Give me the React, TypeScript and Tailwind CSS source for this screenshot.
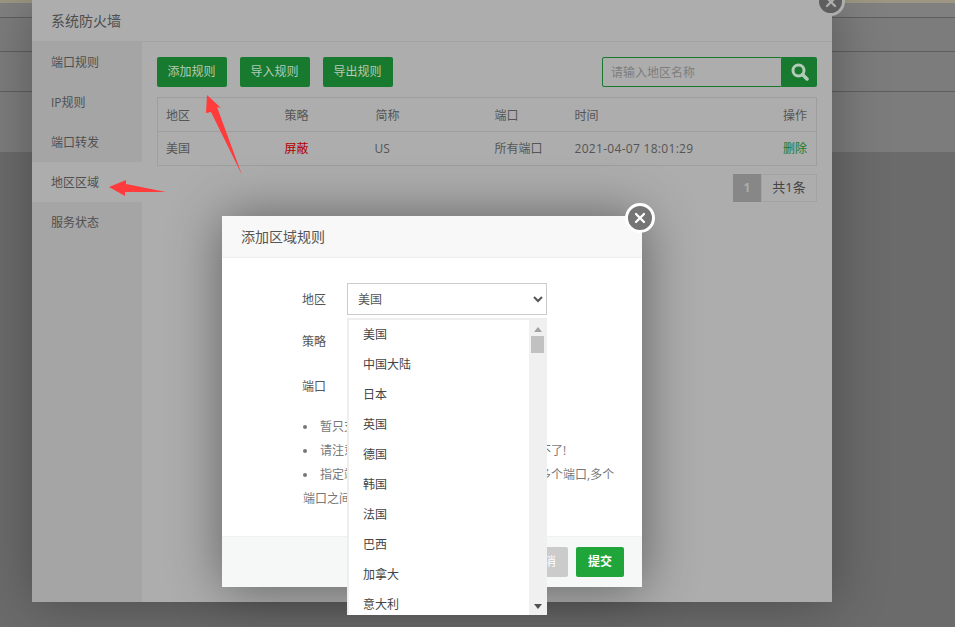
import { X } from 'lucide-react'

const fontStack = "font-['Open_Sans','Noto_Sans_CJK_SC',sans-serif]"

const sideItems = ['端口规则', 'IP规则', '端口转发', '地区区域', '服务状态']
const regions = ['美国', '中国大陆', '日本', '英国', '德国', '韩国', '法国', '巴西', '加拿大', '意大利']

function RuleButton({ label }: { label: string }) {
  return (
    <button className="h-[30px] w-[70px] rounded-[2px] bg-[#187a2e] pr-[1px] text-xs text-[#b3cbb8]">{label}</button>
  )
}

function FirewallPanel() {
  return (
    <div className="absolute left-[32px] top-0 flex h-[602px] w-[800px] flex-col bg-[#adadad] shadow-[1px_1px_50px_rgba(0,0,0,0.3)]">
      <div className="flex h-[42px] items-center border-b border-[#a3a3a3] pl-[19px] text-sm text-[#4e4e4e]">
        系统防火墙
      </div>
      <div className="flex flex-1">
        <ul className="w-[110px] bg-[#a5a5a5] text-xs text-[#505050]">
          {sideItems.map((item) => (
            <li
              key={item}
              className={`flex h-[40px] items-center pl-[19px] pt-[2px] ${item === '地区区域' ? 'bg-[#adadad]' : ''}`}
            >
              {item}
            </li>
          ))}
        </ul>
        <div className="flex-1 px-[15px] pt-[15px]">
          <div className="flex h-[30px] items-center">
            <div className="flex gap-[13px]">
              <RuleButton label="添加规则" />
              <RuleButton label="导入规则" />
              <RuleButton label="导出规则" />
            </div>
            <div className="ml-auto flex h-[30px] w-[215px]">
              <div className="flex w-[180px] items-center rounded-l-[2px] border border-[#187a2e] pl-[8px] pt-[2px] text-xs text-[#7d7d7d]">
                请输入地区名称
              </div>
              <div className="flex w-[35px] items-center justify-center rounded-r-[2px] bg-[#187a2e]">
                <svg width="18" height="18" viewBox="0 0 18 18" fill="none" stroke="#b3cbb8">
                  <circle cx="7.5" cy="7.5" r="5.5" strokeWidth="3" />
                  <line x1="11.5" y1="11.5" x2="16" y2="16" strokeWidth="3.5" strokeLinecap="round" />
                </svg>
              </div>
            </div>
          </div>
          <table className="mt-[10px] w-[660px] table-fixed border-collapse border border-[#9e9e9e] text-xs text-[#555555]">
            <thead>
              <tr className="h-[34px] border-b border-[#9e9e9e] text-left">
                <th className="w-[118px] pl-[8px] pt-[2px] font-normal">地区</th>
                <th className="w-[91px] pl-[9px] pt-[2px] font-normal">策略</th>
                <th className="w-[119px] pl-[9px] pt-[2px] font-normal">简称</th>
                <th className="w-[80px] pl-[9px] pt-[2px] font-normal">端口</th>
                <th className="pl-[9px] pt-[2px] font-normal">时间</th>
                <th className="w-[60px] pr-[9px] pt-[2px] text-right font-normal">操作</th>
              </tr>
            </thead>
            <tbody>
              <tr className="h-[34px]">
                <td className="pl-[8px]">美国</td>
                <td className="pl-[9px] text-[#b20000]">屏蔽</td>
                <td className="pl-[8px]">US</td>
                <td className="pl-[9px]">所有端口</td>
                <td className="pl-[9px] tracking-[0.3px]">2021-04-07 18:01:29</td>
                <td className="pr-[9px] text-right text-[#187a2e]">删除</td>
              </tr>
            </tbody>
          </table>
          <div className="mt-[8px] flex justify-end">
            <div className="flex h-[28px] w-[28px] items-center justify-center bg-[#878787] text-xs font-bold text-[#adadad]">
              1
            </div>
            <div className="flex h-[28px] w-[56px] items-center justify-center border border-[#a3a3a3] text-[13px] text-[#444444]">
              共1条
            </div>
          </div>
        </div>
      </div>
      <div className="absolute left-[784px] top-[-13px] flex h-[29px] w-[29px] items-center justify-center rounded-full border-[3px] border-[#adadad] bg-[#5e5e5e]">
        <X size={16} strokeWidth={3.5} className="text-[#adadad]" />
      </div>
    </div>
  )
}

function RegionDropdown() {
  return (
    <div className="absolute left-[125px] top-[102px] flex h-[297px] w-[200px] overflow-hidden border-2 border-r-0 border-b-0 border-[#eeeeee] bg-white">
      <ul className="flex-1 text-xs text-[#444444]">
        {regions.map((r) => (
          <li key={r} className="flex h-[30px] items-center pl-[14px]">
            {r}
          </li>
        ))}
      </ul>
      <div className="relative w-[18px] bg-[#f0f0f0]">
        <div className="absolute left-[5px] top-[7px] h-0 w-0 border-x-[4px] border-b-[5px] border-x-transparent border-b-[#a3a3a3]" />
        <div className="absolute left-[2px] top-[16px] h-[17px] w-[13px] bg-[#c1c1c1]" />
        <div className="absolute bottom-[6px] left-[5px] h-0 w-0 border-x-[4px] border-t-[5px] border-x-transparent border-t-[#505050]" />
      </div>
    </div>
  )
}

function AddRuleDialog() {
  return (
    <div className="absolute left-[222px] top-[216px] flex h-[371px] w-[420px] flex-col bg-white shadow-[1px_1px_50px_rgba(0,0,0,0.45)]">
      <div className="flex h-[42px] items-center border-b border-[#eeeeee] bg-[#f8f8f8] pl-[19px] text-sm text-[#555555]">
        添加区域规则
      </div>
      <div className="flex-1 pl-[80px] pr-[27px] pt-[25px] text-xs text-[#555555]">
        <div className="mb-[10px] flex h-[32px] items-center">
          <span className="w-[45px] pt-[2px]">地区</span>
          <select className="h-[32px] w-[200px] border border-[#cccccc] bg-white pl-[6px] pt-[1px] text-xs text-[#555555]">
            <option>美国</option>
          </select>
        </div>
        <div className="mb-[13px] flex h-[32px] items-center">
          <span className="w-[45px] pt-[2px]">策略</span>
        </div>
        <div className="flex h-[32px] items-center">
          <span className="w-[45px] pt-[2px]">端口</span>
        </div>
        <ul className="ml-[1px] mt-[13px] list-inside list-disc leading-[24px] text-[#777777] marker:text-[#777777]">
          <li>暂只支持IPv4规则</li>
          <li>请注意屏蔽中国大陆后,国内的用户就访问不了!</li>
          <li>指定端口时,仅对这些端口规则生效可填写多个端口,多个端口之间用英文逗号隔开</li>
        </ul>
      </div>
      <div className="flex h-[51px] items-center justify-end gap-[8px] border-t border-[#eef2f2] bg-[#f6f8f8] pr-[18px]">
        <button className="h-[30px] w-[48px] rounded-[2px] bg-[#cbcbcb] text-xs text-white">取消</button>
        <button className="h-[30px] w-[48px] rounded-[2px] bg-[#20a53a] text-xs font-bold text-white">提交</button>
      </div>
      <div className="absolute left-[403px] top-[-13px] flex h-[30px] w-[30px] items-center justify-center rounded-full border-[3px] border-white bg-[#757575]">
        <X size={16} strokeWidth={3.5} className="text-white" />
      </div>
      <RegionDropdown />
    </div>
  )
}

export default function App() {
  return (
    <div className={`relative h-[627px] w-[955px] overflow-hidden bg-[#6b6b6b] ${fontStack}`}>
      <div className="h-[3px] bg-[#9c9682]" />
      <div className="h-[15px] border-b border-[#5f5f5f] bg-[#808080]" />
      <div className="h-[34px] border-b border-[#5f5f5f] bg-[#7c7c7c]" />
      <div className="h-[40px] border-b border-[#5f5f5f] bg-[#7c7c7c]" />
      <div className="h-[60px] bg-[#7c7c7c]" />

      <FirewallPanel />
      <AddRuleDialog />

      <svg className="absolute left-[200px] top-[90px]" width="50" height="90" viewBox="0 0 50 90">
        <polygon points="7,5 21,18 17,17 42,85 11,22 6,23" fill="#ff3b3b" />
      </svg>
      <svg className="absolute left-[105px] top-[175px]" width="65" height="25" viewBox="0 0 65 25">
        <polygon points="4,12 21,5 21,9 61,17 20,17 20,21" fill="#ff3b3b" />
      </svg>
    </div>
  )
}
